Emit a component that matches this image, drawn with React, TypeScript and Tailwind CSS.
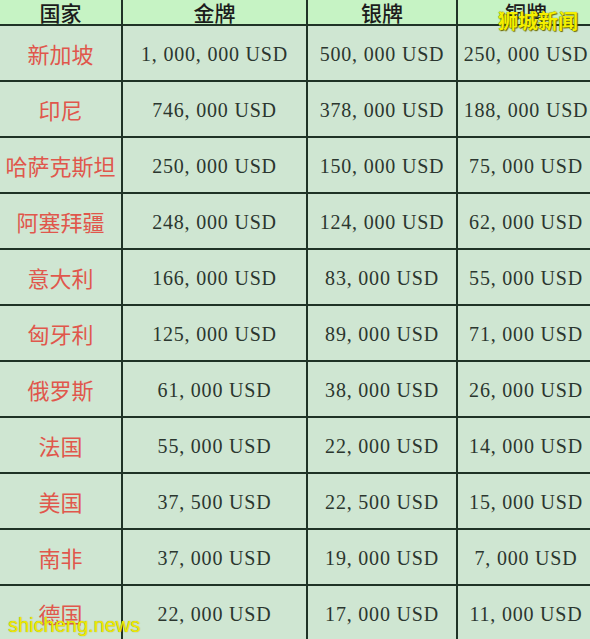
const rows = [
  ["新加坡", "1, 000, 000 USD", "500, 000 USD", "250, 000 USD"],
  ["印尼", "746, 000 USD", "378, 000 USD", "188, 000 USD"],
  ["哈萨克斯坦", "250, 000 USD", "150, 000 USD", "75, 000 USD"],
  ["阿塞拜疆", "248, 000 USD", "124, 000 USD", "62, 000 USD"],
  ["意大利", "166, 000 USD", "83, 000 USD", "55, 000 USD"],
  ["匈牙利", "125, 000 USD", "89, 000 USD", "71, 000 USD"],
  ["俄罗斯", "61, 000 USD", "38, 000 USD", "26, 000 USD"],
  ["法国", "55, 000 USD", "22, 000 USD", "14, 000 USD"],
  ["美国", "37, 500 USD", "22, 500 USD", "15, 000 USD"],
  ["南非", "37, 000 USD", "19, 000 USD", "7, 000 USD"],
  ["德国", "22, 000 USD", "17, 000 USD", "11, 000 USD"],
];

const headers = ["国家", "金牌", "银牌", "铜牌"];

const cjk = "font-['Noto_Sans_CJK_SC',sans-serif]";
const num = "font-['Liberation_Serif','Noto_Sans_CJK_SC',serif]";

export default function App() {
  return (
    <div className="relative h-[639px] w-[590px] overflow-hidden bg-[#cfe6d2]">
      <div className="grid w-[594px] grid-cols-[121px_183px_148px_136px] grid-rows-[24px_repeat(11,54px)] gap-[2px] bg-[#1f3326]">
        {headers.map((h) => (
          <div
            key={h}
            className={`flex items-center justify-center overflow-hidden bg-[#c6f3c4] text-[21px] leading-[24px] font-medium text-[#1c1c1c] ${cjk}`}
          >
            {h}
          </div>
        ))}
        {rows.map((r) => (
          <>
            <div
              key={r[0]}
              className={`flex items-center justify-center bg-[#cfe6d2] text-[22px] leading-none text-[#e0574c] ${cjk}`}
            >
              {r[0]}
            </div>
            {r.slice(1).map((v, i) => (
              <div
                key={r[0] + i}
                className={`flex items-center justify-center whitespace-pre bg-[#cfe6d2] pt-[2px] text-[20px] leading-none tracking-[0.8px] text-[#2b362f] ${num}`}
              >
                {v}
              </div>
            ))}
          </>
        ))}
      </div>

      {/* watermarks */}
      <div
        className={`absolute top-[11px] left-[498px] text-[20px] leading-none font-bold text-[#f4f000] [text-shadow:0_0_1px_#5a5a00,1px_1px_1px_#6b6b00] ${cjk}`}
      >
        狮城新闻
      </div>
      <div className="absolute top-[615px] left-[8px] font-['Liberation_Sans',sans-serif] text-[20px] leading-none text-[#f0ec00] [text-shadow:0_0_1px_#8a8a00]">
        shicheng.news
      </div>
    </div>
  );
}
